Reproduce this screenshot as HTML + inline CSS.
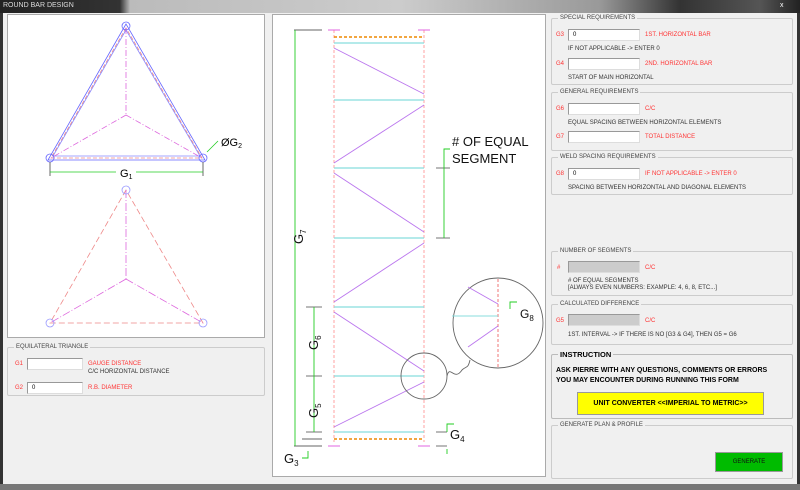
<!DOCTYPE html>
<html><head><style>
*{margin:0;padding:0;box-sizing:border-box}
body{width:800px;height:490px;overflow:hidden;background:#f0f0f0;font-family:"Liberation Sans",sans-serif;position:relative}
.abs{position:absolute}
.tb{left:0;top:0;width:800px;height:13px;background:linear-gradient(90deg,#222 0,#333 120px,#bbb 130px,#ccc 400px,#999 600px,#333 680px,#555 760px,#222 800px)}
.tb span{position:absolute;left:3px;top:2px;font-size:7px;color:#ddd}
.box{background:#fff;border:1px solid #aaa}
fieldset{position:absolute;border:1px solid #ccc;border-radius:2px;padding:0}
legend{font-size:6px;color:#444;margin-left:6px;padding:0 2px}
.t{position:absolute;font-size:6px;color:#333;white-space:nowrap}
.r{color:#f33}
.in{position:absolute;background:#fff;border:1px solid #999;border-right-color:#ddd;border-bottom-color:#ddd;font-size:6px;padding:0 4px;height:12px;line-height:10px}
.gr{background:#ccc}
</style></head><body>
<div class="abs tb"><span>ROUND BAR DESIGN</span><span style="left:780px;color:#fff">x</span></div>
<div class="abs" style="left:0;top:13px;width:3px;height:477px;background:#333"></div>
<div class="abs" style="left:797px;top:13px;width:3px;height:477px;background:#333"></div>
<div class="abs" style="left:0;top:484px;width:800px;height:6px;background:#777"></div>

<div class="abs box" style="left:7px;top:14px;width:258px;height:324px"></div>
<svg class="abs" style="left:0;top:0" width="270" height="340">
<g fill="none" stroke-width="0.8">
<polygon points="126,24 48,160 205,160" stroke="#66f"/>
<polygon points="126,30 53,156 200,156" stroke="#88f"/>
<polygon points="126,28 51,158 202,158" stroke="#e88" stroke-dasharray="4 2"/>
<line x1="126" y1="28" x2="126" y2="115" stroke="#d6d" stroke-dasharray="6 2 1 2"/>
<line x1="126" y1="115" x2="202" y2="158" stroke="#d6d" stroke-dasharray="6 2 1 2"/>
<line x1="126" y1="115" x2="51" y2="158" stroke="#d6d" stroke-dasharray="6 2 1 2"/>
<circle cx="126" cy="26" r="4" stroke="#66f"/><circle cx="50" cy="158" r="4" stroke="#66f"/><circle cx="203" cy="158" r="4" stroke="#66f"/>
<line x1="50" y1="162" x2="50" y2="176" stroke="#444"/><line x1="203" y1="162" x2="203" y2="176" stroke="#444"/>
<line x1="50" y1="172" x2="203" y2="172" stroke="#2c2"/>
<line x1="207" y1="152" x2="218" y2="141" stroke="#2c2"/>
<polygon points="126,190 50,323 203,323" stroke="#e88" stroke-dasharray="6 3"/>
<line x1="126" y1="190" x2="126" y2="279" stroke="#d6d" stroke-dasharray="8 2 1 2"/>
<line x1="126" y1="279" x2="50" y2="323" stroke="#d6d" stroke-dasharray="8 2 1 2"/>
<line x1="126" y1="279" x2="203" y2="323" stroke="#d6d" stroke-dasharray="8 2 1 2"/>
<circle cx="126" cy="190" r="4" stroke="#99f"/><circle cx="50" cy="323" r="4" stroke="#99f"/><circle cx="203" cy="323" r="4" stroke="#99f"/>
</g>
<rect x="116" y="166" width="20" height="12" fill="#fff"/>
<text x="120" y="177" font-size="11" font-family="Liberation Sans">G<tspan font-size="7" dy="2">1</tspan></text>
<text x="221" y="146" font-size="11" font-family="Liberation Sans">ØG<tspan font-size="7" dy="2">2</tspan></text>
</svg>

<fieldset style="left:7px;top:344px;width:258px;height:52px"><legend>EQUILATERAL TRIANGLE</legend></fieldset>
<div class="t r" style="left:15px;top:361px">G1</div><div class="in" style="left:27px;top:358px;width:56px"></div>
<div class="t r" style="left:88px;top:361px">GAUGE DISTANCE</div>
<div class="t" style="left:88px;top:369px">C/C HORIZONTAL DISTANCE</div>
<div class="t r" style="left:15px;top:385px">G2</div><div class="in" style="left:27px;top:382px;width:56px">0</div>
<div class="t r" style="left:88px;top:385px">R.B. DIAMETER</div>

<div class="abs box" style="left:272px;top:14px;width:274px;height:463px"></div>
<svg class="abs" style="left:272px;top:14px" width="274" height="463">
<g fill="none" stroke-width="0.9">
<line x1="62" y1="16" x2="62" y2="428" stroke="#f99" stroke-dasharray="3 2"/>
<line x1="152" y1="16" x2="152" y2="428" stroke="#f99" stroke-dasharray="3 2"/>
<g stroke="#8dd" stroke-width="1.2"><line x1="62" y1="29" x2="152" y2="29"/><line x1="62" y1="86" x2="152" y2="86"/><line x1="62" y1="154" x2="152" y2="154"/><line x1="62" y1="224" x2="152" y2="224"/><line x1="62" y1="293" x2="152" y2="293"/><line x1="62" y1="362" x2="152" y2="362"/><line x1="62" y1="418" x2="152" y2="418"/></g>
<g stroke="#e80" stroke-width="1.5" stroke-dasharray="3 2"><line x1="62" y1="23" x2="152" y2="23"/><line x1="62" y1="425" x2="152" y2="425"/></g>
<g stroke="#b7e"><line x1="62" y1="34" x2="152" y2="80"/><line x1="152" y1="91" x2="62" y2="149"/><line x1="62" y1="159" x2="152" y2="218"/><line x1="152" y1="229" x2="62" y2="288"/><line x1="62" y1="298" x2="152" y2="357"/><line x1="152" y1="368" x2="62" y2="413"/></g>
<g stroke="#d5d"><line x1="56" y1="16" x2="68" y2="16"/><line x1="146" y1="16" x2="158" y2="16"/><line x1="56" y1="432" x2="68" y2="432"/><line x1="146" y1="432" x2="158" y2="432"/></g>
<g stroke="#666"><line x1="22" y1="16" x2="50" y2="16"/><line x1="22" y1="432" x2="50" y2="432"/><line x1="30" y1="425" x2="50" y2="425"/><line x1="34" y1="418" x2="50" y2="418"/><line x1="34" y1="362" x2="50" y2="362"/><line x1="34" y1="293" x2="50" y2="293"/><line x1="164" y1="154" x2="178" y2="154"/><line x1="164" y1="224" x2="178" y2="224"/><line x1="164" y1="418" x2="175" y2="418"/><line x1="164" y1="432" x2="175" y2="432"/>
<circle cx="152" cy="362" r="23"/><circle cx="226" cy="309" r="45"/><path d="M175 362 C178 350,182 368,190 356 C194 352,196 355,198 346"/></g>
<g stroke="#2c2"><line x1="23" y1="16" x2="23" y2="432"/><line x1="42" y1="293" x2="42" y2="362"/><line x1="42" y1="362" x2="42" y2="418"/><line x1="172" y1="154" x2="172" y2="224"/><path d="M172 154 V135 H178"/><path d="M175 418 V410 H182"/><path d="M175 435 V440"/><path d="M36 437 V444 H30"/><path d="M238 295 V288 H245"/></g>
<line x1="226" y1="265" x2="226" y2="353" stroke="#e66" stroke-dasharray="3 2"/>
<line x1="180" y1="302" x2="226" y2="302" stroke="#8dd"/>
<line x1="196" y1="273" x2="226" y2="290" stroke="#b7e"/><line x1="226" y1="312" x2="196" y2="333" stroke="#b7e"/>
</g>
<g font-family="Liberation Sans" fill="#111">
<text x="180" y="132" font-size="13">#&#160;OF EQUAL</text><text x="180" y="149" font-size="13">SEGMENT</text>
<text transform="translate(31,230) rotate(-90)" font-size="13">G<tspan font-size="8" dy="3">7</tspan></text>
<text transform="translate(46,336) rotate(-90)" font-size="13">G<tspan font-size="8" dy="3">6</tspan></text>
<text transform="translate(46,404) rotate(-90)" font-size="13">G<tspan font-size="8" dy="3">5</tspan></text>
<text x="178" y="425" font-size="13">G<tspan font-size="8" dy="3">4</tspan></text>
<text x="12" y="449" font-size="13">G<tspan font-size="8" dy="3">3</tspan></text>
<text x="248" y="304" font-size="12">G<tspan font-size="8" dy="3">8</tspan></text>
</g>
</svg>

<fieldset style="left:551px;top:15px;width:242px;height:70px"><legend>SPECIAL REQUIREMENTS</legend></fieldset>
<div class="t r" style="left:556px;top:32px">G3</div><div class="in" style="left:568px;top:29px;width:72px">0</div><div class="t r" style="left:645px;top:32px">1ST. HORIZONTAL BAR</div>
<div class="t" style="left:568px;top:46px">IF NOT APPLICABLE -&gt; ENTER 0</div>
<div class="t r" style="left:556px;top:61px">G4</div><div class="in" style="left:568px;top:58px;width:72px"></div><div class="t r" style="left:645px;top:61px">2ND. HORIZONTAL BAR</div>
<div class="t" style="left:568px;top:75px">START OF MAIN HORIZONTAL</div>

<fieldset style="left:551px;top:89px;width:242px;height:62px"><legend>GENERAL REQUIREMENTS</legend></fieldset>
<div class="t r" style="left:556px;top:106px">G6</div><div class="in" style="left:568px;top:103px;width:72px"></div><div class="t r" style="left:645px;top:106px">C/C</div>
<div class="t" style="left:568px;top:120px">EQUAL SPACING BETWEEN HORIZONTAL ELEMENTS</div>
<div class="t r" style="left:556px;top:134px">G7</div><div class="in" style="left:568px;top:131px;width:72px"></div><div class="t r" style="left:645px;top:134px">TOTAL DISTANCE</div>

<fieldset style="left:551px;top:154px;width:242px;height:41px"><legend>WELD SPACING REQUIREMENTS</legend></fieldset>
<div class="t r" style="left:556px;top:171px">G8</div><div class="in" style="left:568px;top:168px;width:72px">0</div><div class="t r" style="left:645px;top:171px">IF NOT APPLICABLE -&gt; ENTER 0</div>
<div class="t" style="left:568px;top:185px">SPACING BETWEEN HORIZONTAL AND DIAGONAL ELEMENTS</div>

<fieldset style="left:551px;top:248px;width:242px;height:48px"><legend>NUMBER OF SEGMENTS</legend></fieldset>
<div class="t r" style="left:557px;top:265px">#</div><div class="in gr" style="left:568px;top:261px;width:72px"></div><div class="t r" style="left:645px;top:265px">C/C</div>
<div class="t" style="left:568px;top:278px;line-height:7px">#&#160;OF EQUAL SEGMENTS<br>[ALWAYS EVEN NUMBERS: EXAMPLE: 4, 6, 8, ETC...]</div>

<fieldset style="left:551px;top:301px;width:242px;height:44px"><legend>CALCULATED DIFFERENCE</legend></fieldset>
<div class="t r" style="left:556px;top:318px">G5</div><div class="in gr" style="left:568px;top:314px;width:72px"></div><div class="t r" style="left:645px;top:318px">C/C</div>
<div class="t" style="left:568px;top:332px">1ST. INTERVAL -&gt; IF THERE IS NO [G3 &amp; G4], THEN G5 = G6</div>

<fieldset style="left:551px;top:350px;width:242px;height:69px;border-color:#bbb"><legend style="font-size:7.5px;font-weight:bold;color:#000">INSTRUCTION</legend></fieldset>
<div class="t" style="left:556px;top:366px;font-size:7px;font-weight:bold;color:#000;line-height:10px">ASK PIERRE WITH ANY QUESTIONS, COMMENTS OR ERRORS<br>YOU MAY ENCOUNTER DURING RUNNING THIS FORM</div>
<div class="abs" style="left:577px;top:392px;width:187px;height:23px;background:#ff0;border:1px solid #999;font-size:7px;font-weight:bold;text-align:center;line-height:22px">UNIT CONVERTER &lt;&lt;IMPERIAL TO METRIC&gt;&gt;</div>

<fieldset style="left:551px;top:422px;width:242px;height:57px"><legend>GENERATE PLAN &amp; PROFILE</legend></fieldset>
<div class="abs" style="left:715px;top:452px;width:68px;height:20px;background:#0b0;border:1px solid #999;font-size:6px;text-align:center;line-height:19px;color:#111">GENERATE</div>
</body></html>
